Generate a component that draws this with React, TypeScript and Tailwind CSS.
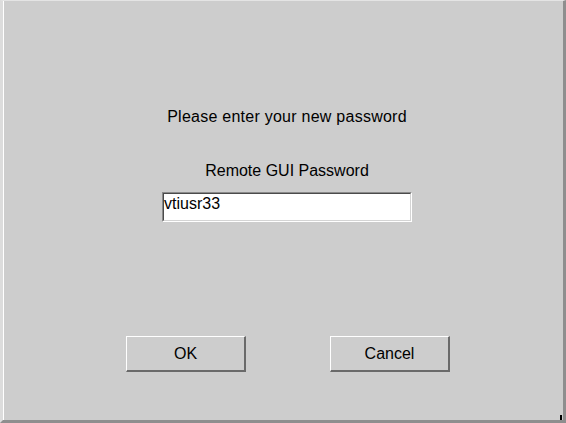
export default function App() {
  return (
    <div
      className="relative w-[566px] h-[423px] bg-[#cdcdcd] border-t border-t-[#e4e4e4] border-l-[3px] border-l-[#dcdcdc] border-r-[3px] border-r-[#8e8e8e] border-b-[3px] border-b-[#8e8e8e] text-black"
      style={{ fontFamily: '"Liberation Sans", Arial, sans-serif' }}
    >
      <div className="h-full border-l border-l-white flex flex-col pl-[7px] text-[16px] leading-[18px]">
        <div className="mt-[107px] text-center tracking-[0.25px]">Please enter your new password</div>
        <div className="mt-[36px] text-center">Remote GUI Password</div>
        <div className="mt-[12px] mx-auto w-[250px] h-[30px] border-t border-l border-t-[#8a8a8a] border-l-[#8a8a8a] border-b border-r border-b-white border-r-white">
          <div className="h-full bg-white border-t border-l border-t-[#4a4a4a] border-l-[#4a4a4a] border-b border-r border-b-[#d4d4d4] border-r-[#d4d4d4] pt-[1px]">
            vtiusr33
          </div>
        </div>
        <div className="mt-[114px] ml-[2px] flex justify-center gap-[84px]">
          <div className="w-[120px] h-[36px] flex items-center justify-center border-t border-l border-t-white border-l-white border-b-2 border-r-2 border-b-[#6a6a6a] border-r-[#6a6a6a] pt-[1px]">
            OK
          </div>
          <div className="w-[120px] h-[36px] flex items-center justify-center border-t border-l border-t-white border-l-white border-b-2 border-r-2 border-b-[#6a6a6a] border-r-[#6a6a6a] pt-[1px]">
            Cancel
          </div>
        </div>
      </div>
      <span className="absolute right-[1px] bottom-[0px] w-[2px] h-[5px] bg-black" />
    </div>
  );
}
